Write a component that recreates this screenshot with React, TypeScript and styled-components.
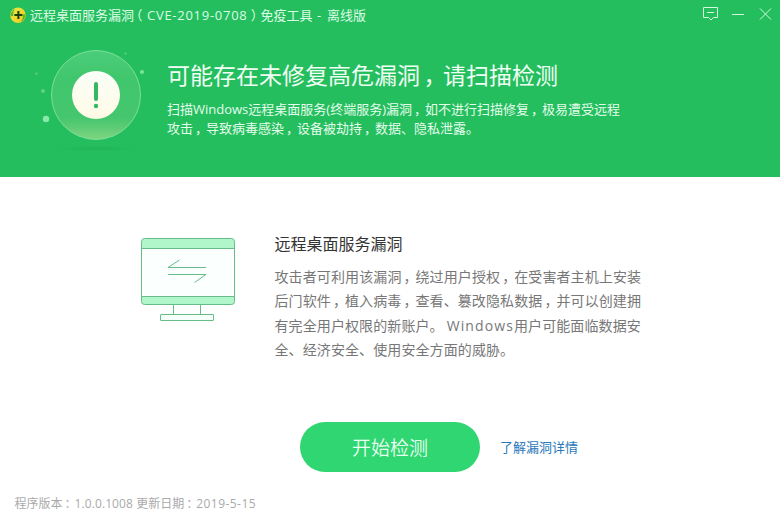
import React from "react";
import styled, { createGlobalStyle } from "styled-components";

const GlobalStyle = createGlobalStyle`
  * { box-sizing: border-box; }
  body { margin: 0; background: #fff; }
`;

const Window = styled.div`
  width: 780px;
  height: 520px;
  display: flex;
  flex-direction: column;
  background: #fff;
  overflow: hidden;
  font-family: "Open Sans", "Noto Sans CJK SC", sans-serif;
`;

const Header = styled.header`
  height: 177px;
  background: #24be5e;
`;

const TitleBar = styled.div`
  height: 32px;
  display: flex;
  align-items: flex-start;
  padding: 7px 0 0 10px;
  color: #dcfbe6;
`;

const AppTitle = styled.div`
  flex: 1;
  margin-left: 4px;
`;

const Controls = styled.div`
  display: flex;
`;

const Line = styled.div<{ $size: number; $height: number; $spacing?: number }>`
  white-space: nowrap;
  font-size: ${(p) => p.$size}px;
  line-height: ${(p) => p.$height}px;
  letter-spacing: ${(p) => p.$spacing ?? 0}px;
`;

const Latin = styled.span<{ $spacing: number; $before?: number }>`
  letter-spacing: ${(p) => p.$spacing}px;
  margin-left: ${(p) => p.$before ?? 0}px;
  white-space: pre;
`;

const Mark = styled.span<{ $indent: number }>`
  display: inline-block;
  width: 1em;
  padding-left: ${(p) => p.$indent}em;
  line-height: 1;
  font-feature-settings: "halt" 1;
`;

const Hero = styled.div`
  display: flex;
`;

const HeroArt = styled.div`
  width: 167px;
  height: 130px;
`;

const HeroText = styled.div`
  color: #e4fcec;
  padding-top: 26px;
`;

const HeroTitle = styled(Line)`
  margin-bottom: 8px;
  color: #f0fff4;
`;

const Main = styled.main`
  display: flex;
  padding-top: 55px;
  height: 245px;
`;

const MonitorArt = styled.div`
  width: 274.5px;
  padding: 5px 0 0 140px;
`;

const Details = styled.div`
  color: #777;
`;

const DetailTitle = styled(Line)`
  color: #333;
  margin-bottom: 8px;
`;

const Actions = styled.div`
  display: flex;
  align-items: center;
  padding-left: 300px;
  height: 50px;
`;

const ScanButton = styled.button`
  width: 180px;
  height: 50px;
  padding: 0 0 2px;
  border: 0;
  border-radius: 25px;
  background: #2fd672;
  color: #e8fff0;
  font: 350 19px "Noto Sans CJK SC", sans-serif;
`;

const DetailLink = styled.a`
  margin-left: 20px;
  color: #2878b8;
  font-size: 13px;
  line-height: 20px;
`;

const Footer = styled.footer`
  padding: 22px 0 0 14.5px;
  color: #aaa;
`;

const Logo = () => (
  <svg width="16" height="16" viewBox="0 0 16 16">
    <defs>
      <linearGradient id="logo" x1="0" y1="0" x2="1" y2="1">
        <stop offset="0" stopColor="#e8ee48" />
        <stop offset="1" stopColor="#f4c51c" />
      </linearGradient>
    </defs>
    <circle cx="8" cy="8.2" r="7.8" fill="url(#logo)" />
    <path d="M.3 9.2Q1 4 5 1.5Q2.5 5 3.2 9ZM15.7 7.2Q15 12.5 11 15Q13.6 11.5 12.8 7.5Z" fill="#58b832" />
    <path d="M8.4 4v8M4.4 8h8" stroke="#164012" strokeWidth="2" />
  </svg>
);

const WindowIcons = () => (
  <svg width="80" height="18" viewBox="700 7 80 18" fill="none" stroke="#d5fae1" strokeWidth="1">
    <path d="M703.5 7.5h14v10h-4l-2.500 2.500l-2.500-2.500h-5zM707 12.500h7M732 14.500h12M760 8.500l11 11M771 8.500l-11 11" />
  </svg>
);

const AlertArt = () => (
  <svg width="167" height="130" viewBox="0 32 167 130">
    <defs>
      <linearGradient id="bubble" x1="0" y1="0" x2="0" y2="1">
        <stop offset="0" stopColor="#65d88e" stopOpacity=".6" />
        <stop offset=".3" stopColor="#50cb75" stopOpacity=".65" />
        <stop offset=".75" stopColor="#4fc974" stopOpacity=".75" />
        <stop offset="1" stopColor="#82d481" />
      </linearGradient>
      <linearGradient id="disc" x1="0" y1="0" x2="0" y2="1">
        <stop offset="0" stopColor="#fafff9" />
        <stop offset="1" stopColor="#fffae5" />
      </linearGradient>
      <radialGradient id="shade">
        <stop offset="0" stopColor="#149c4a" stopOpacity=".3" />
        <stop offset="1" stopColor="#149c4a" stopOpacity="0" />
      </radialGradient>
    </defs>
    <ellipse cx="96" cy="148.500" rx="42" ry="2.500" fill="url(#shade)" />
    <circle cx="96" cy="95" r="44.500" fill="url(#bubble)" stroke="#7ddf98" />
    <circle cx="96" cy="95" r="24" fill="url(#disc)" />
    <path d="M96 84v15" stroke="#35b863" strokeWidth="4" strokeLinecap="round" />
    <circle cx="96" cy="106" r="2.200" fill="#35b863" />
    <circle cx="46" cy="119" r="3.200" fill="#88eba9" />
    <circle cx="43" cy="91" r="2.100" fill="#5cd384" />
    <circle cx="36.500" cy="73.500" r="1.500" fill="#4bca74" />
    <circle cx="142" cy="72" r="2.100" fill="#76e29a" />
    <circle cx="125.500" cy="53.500" r="1.300" fill="#4fcd79" />
  </svg>
);

const Monitor = () => (
  <svg width="97" height="86" viewBox="140 237 97 86" fill="none" stroke="#67bd8a" strokeWidth="1">
    <rect x="141.500" y="238.500" width="93" height="66" rx="3" fill="#b1f6cb" />
    <path d="M141.500 248.500h93v48h-93z" fill="#fbfffd" />
    <path d="M173.500 305v9.500M200.500 305v9.500" />
    <rect x="160.500" y="314.500" width="53" height="6" rx=".5" fill="#f7fffb" />
    <path d="M206 267.500h-38l11.500-7.500M168 274.500h38l-11.500 8" />
  </svg>
);

const markIndent: Record<string, number> = { "，": 0.15, "：": 0.17, "（": 0.15, "）": 0.25 };

/* Places full-width punctuation near the middle of its cell. */
const Text = ({ children }: { children: string }) => (
  <>
    {children.split(/([，：（）])/).map((part, i) =>
      part in markIndent ? <Mark key={i} $indent={markIndent[part]}>{part}</Mark> : part
    )}
  </>
);

export default function App() {
  return (
    <>
      <GlobalStyle />
      <Window>
        <Header>
          <TitleBar>
            <Logo />
            <AppTitle>
              <Line $size={13} $height={17}>
                <Text>远程桌面服务漏洞（</Text>
                <Latin $spacing={0.73}>CVE-2019-0708</Latin>
                <Text>）免疫工具</Text>
                <Latin $spacing={1.2}>{" - "}</Latin>离线版
              </Line>
            </AppTitle>
            <Controls><WindowIcons /></Controls>
          </TitleBar>
          <Hero>
            <HeroArt><AlertArt /></HeroArt>
            <HeroText>
              <HeroTitle $size={23} $height={34}><Text>可能存在未修复高危漏洞，请扫描检测</Text></HeroTitle>
              <Line $size={13} $height={19}><Text>扫描Windows远程桌面服务(终端服务)漏洞，如不进行扫描修复，极易遭受远程</Text></Line>
              <Line $size={13} $height={19}><Text>攻击，导致病毒感染，设备被劫持，数据、隐私泄露。</Text></Line>
            </HeroText>
          </Hero>
        </Header>
        <Main>
          <MonitorArt><Monitor /></MonitorArt>
          <Details>
            <DetailTitle $size={16} $height={25}>远程桌面服务漏洞</DetailTitle>
            <Line $size={14} $height={24.3} $spacing={0.11}><Text>攻击者可利用该漏洞，绕过用户授权，在受害者主机上安装</Text></Line>
            <Line $size={14} $height={24.3} $spacing={0.11}><Text>后门软件，植入病毒，查看、篡改隐私数据，并可以创建拥</Text></Line>
            <Line $size={14} $height={24.3} $spacing={0.1}>
              有完全用户权限的新账户。<Latin $spacing={1.1} $before={3}>Windows</Latin>用户可能面临数据安
            </Line>
            <Line $size={14} $height={24.3} $spacing={0.1}>全、经济安全、使用安全方面的威胁。</Line>
          </Details>
        </Main>
        <Actions>
          <ScanButton>开始检测</ScanButton>
          <DetailLink>了解漏洞详情</DetailLink>
        </Actions>
        <Footer>
          <Line $size={12} $height={19}>
            <Text>程序版本：</Text>
            <Latin $spacing={0.1}>1.0.0.1008 </Latin>
            <Text>更新日期：</Text>
            <Latin $spacing={0.45}>2019-5-15</Latin>
          </Line>
        </Footer>
      </Window>
    </>
  );
}
